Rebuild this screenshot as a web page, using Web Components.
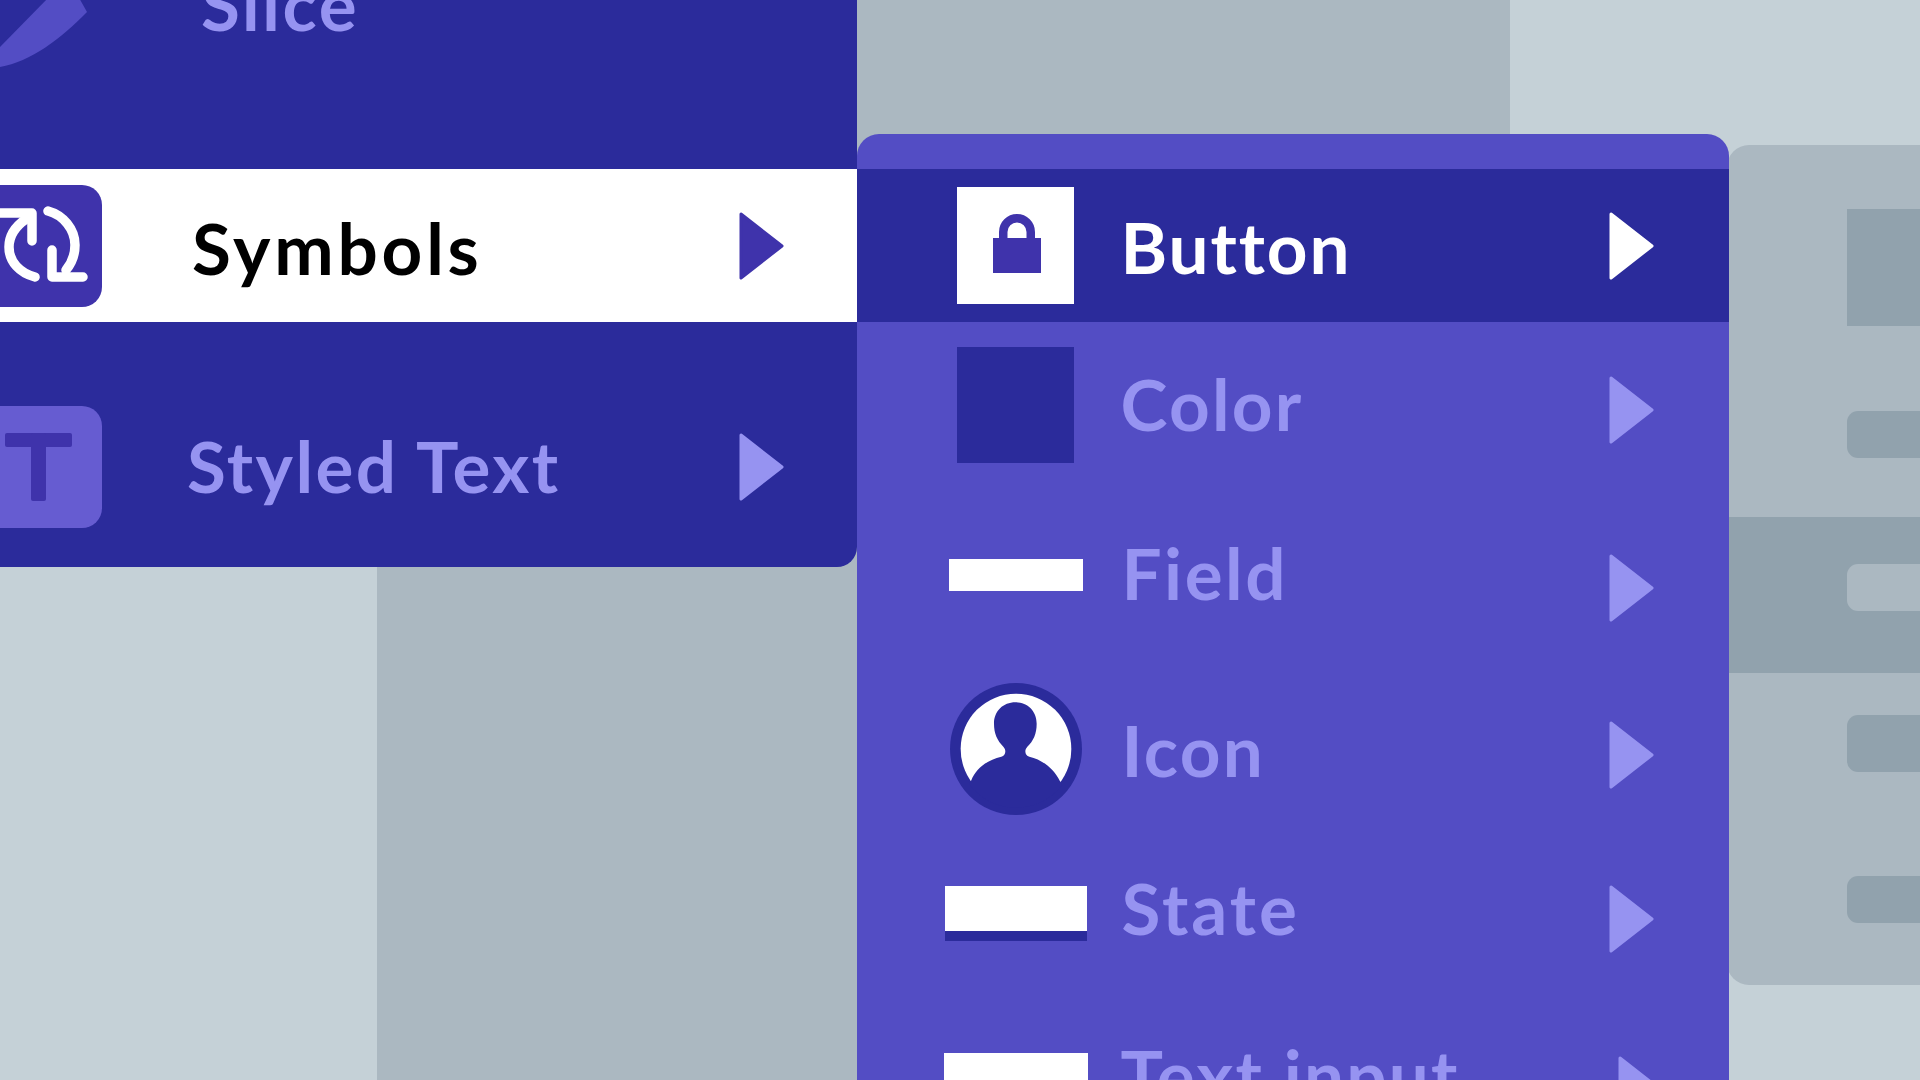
<!DOCTYPE html>
<html>
<head>
<meta charset="utf-8">
<title>Symbols menu</title>
<style>
  html, body { margin: 0; padding: 0; background: #c5d1d7; }
</style>
</head>
<body>
<app-stage>
  <back-panel></back-panel>

  <menu-panel side="left">
    <menu-row height="249" up="44.5" label="Slice" label-up="41" label-x="99" label-space="2.5" no-arrow muted>
      <svg slot="icon" width="102" height="134" viewBox="0 -67 102 134"><path d="M50 -4 H78 L87 12 C62 38 30 62 0 67 V47 Z" fill="#534dc4"/></svg>
    </menu-row>
    <menu-row height="153" label="Symbols" label-up="-2" label-x="90" label-space="3.8" selected>
      <icon-tile slot="icon" color="#3f33ab">
        <svg width="102" height="122" viewBox="0 0 102 122" fill="none" stroke="#fff" stroke-width="9.5" stroke-linecap="round" stroke-linejoin="round">
          <path d="M-6 28 H32 V56"/>
          <path d="M26 34 C13 43 9 53 9 62 C9 77 20 88 35 92"/>
          <path d="M48 26 C63 30 75 44 75 60 C75 71 71 79 66 85"/>
          <path d="M52 65 V92 H83"/>
        </svg>
      </icon-tile>
    </menu-row>
    <menu-row height="154" gap-top="68" label="Styled Text" label-up="1.5" label-x="85" label-space="2.4" muted>
      <icon-tile slot="icon" color="#665cd1">
        <svg width="102" height="122" viewBox="0 0 102 122" fill="#3f33ab">
          <rect x="5" y="27" width="67" height="14" rx="2"/>
          <rect x="31" y="27" width="15" height="68" rx="2"/>
        </svg>
      </icon-tile>
    </menu-row>
  </menu-panel>

  <menu-panel side="right">
    <menu-row height="153" label="Button" label-up="-1" label-x="25" label-space="1.9" arrow-right="74" active indent>
      <svg slot="icon" width="117" height="117" viewBox="0 0 117 117">
        <rect width="117" height="117" fill="#fff"/>
        <path d="M46.250 51 V45 A13.750 13.750 0 0 1 73.750 45 V51" fill="none" stroke="#3f33ab" stroke-width="8.500"/>
        <rect x="36" y="51" width="48" height="35" fill="#3f33ab"/>
      </svg>
    </menu-row>
    <menu-row height="176" up="5" label="Color" label-up="6.5" label-x="25" label-space="2.2" arrow-right="74" muted indent>
      <svg slot="icon" width="117" height="116" viewBox="0 0 117 116"><rect width="117" height="116" fill="#2b2b9b"/></svg>
    </menu-row>
    <menu-row height="180" up="13.5" label="Field" label-up="15.5" label-x="26" label-space="2.5" arrow-right="74" muted indent>
      <svg slot="icon" width="134" height="32" viewBox="0 0 134 32"><rect width="134" height="32" fill="#fff"/></svg>
    </menu-row>
    <menu-row height="154" up="6.5" label="Icon" label-up="5.5" label-x="26" label-space="2.3" arrow-right="74" muted indent>
      <svg slot="icon" width="160" height="160" viewBox="16 -4 480 480">
        <circle cx="256" cy="236" r="198" fill="#2b2b9b"/>
        <circle cx="256" cy="236" r="166" fill="#fff"/>
        <path d="M122 330 C135 295 170 268 212 259 C225 255 228 240 218 229 C200 210 190 190 190 160 C190 122 218 96 254 96 C290 96 318 122 318 160 C318 190 308 212 290 229 C280 240 283 255 296 259 C335 268 370 295 388 333 L395 345 A177 177 0 0 1 115 342 Z" fill="#2b2b9b"/>
      </svg>
    </menu-row>
    <menu-row height="174" up="5.5" label="State" label-up="11.5" label-x="26" label-space="3" arrow-right="74" muted indent>
      <svg slot="icon" width="142" height="55" viewBox="0 0 142 55"><rect width="142" height="45" fill="#fff"/><rect y="45" width="142" height="10" fill="#2b2b9b"/></svg>
    </menu-row>
    <menu-row height="168" up="15" label="Text input" label-up="15.5" label-x="25" label-space="2.2" arrow-right="65" muted indent>
      <svg slot="icon" width="144" height="44" viewBox="0 0 144 44"><rect width="144" height="44" fill="#fff"/></svg>
    </menu-row>
  </menu-panel>
</app-stage>

<script>
// components

class AppStage extends HTMLElement {
  constructor() {
    super();
    this.attachShadow({ mode: 'open' });
    this.shadowRoot.innerHTML = `
      <style>
        :host {
          display: block;
          position: relative;
          width: 1920px;
          height: 1080px;
          overflow: hidden;
          background: #c5d1d7;
          font-family: Lato, "Noto Sans", sans-serif;
        }
        .bands {
          display: grid;
          grid-template-columns: 377px 1133px 1fr;
          height: 100%;
        }
        .mid { background: #abb8c1; }
      </style>
      <div class="bands"><div></div><div class="mid"></div><div></div></div>
      <slot></slot>
    `;
  }
}

class BackPanel extends HTMLElement {
  constructor() {
    super();
    this.attachShadow({ mode: 'open' });
    this.shadowRoot.innerHTML = `
      <style>
        :host {
          display: flex;
          flex-direction: column;
          position: absolute;
          left: 1727px;
          top: 145px;
          width: 260px;
          height: 840px;
          box-sizing: border-box;
          padding-top: 64px;
          background: #abb8c1;
          border-radius: 22px;
        }
        .bar { margin-left: 120px; height: 47px; background: #91a2ad; border-radius: 11px; flex: none; }
        .square { margin-left: 120px; height: 117px; background: #91a2ad; flex: none; }
        .band { margin-top: 59px; height: 156px; background: #91a2ad; display: flex; flex-direction: column; flex: none; padding-top: 47px; box-sizing: border-box; }
        .band .bar { background: #abb8c1; }
      </style>
      <div class="square"></div>
      <div class="bar" style="margin-top:85px"></div>
      <div class="band"><div class="bar"></div></div>
      <div class="bar" style="margin-top:42px;height:57px"></div>
      <div class="bar" style="margin-top:104px"></div>
    `;
  }
}

class MenuPanel extends HTMLElement {
  constructor() {
    super();
    this.attachShadow({ mode: 'open' });
    this.shadowRoot.innerHTML = `
      <style>
        :host {
          display: flex;
          flex-direction: column;
          position: absolute;
          overflow: hidden;
          box-sizing: border-box;
        }
        :host([side="left"]) {
          left: 0;
          top: -80px;
          width: 857px;
          height: 647px;
          background: #2b2b9b;
          border-radius: 0 0 20px 0;
        }
        :host([side="right"]) {
          left: 857px;
          top: 134px;
          width: 872px;
          padding-top: 35px;
          background: #534dc4;
          border-radius: 22px 22px 0 0;
        }
      </style>
      <slot></slot>
    `;
  }
}

class IconTile extends HTMLElement {
  constructor() {
    super();
    this.attachShadow({ mode: 'open' });
    this.shadowRoot.innerHTML = `
      <style>
        :host {
          display: block;
          width: 102px;
          height: 122px;
          border-radius: 0 20px 20px 0;
          background: var(--tile);
          overflow: hidden;
        }
        ::slotted(svg) { display: block; }
      </style>
      <slot></slot>
    `;
    this.style.setProperty('--tile', this.getAttribute('color'));
  }
}

class MenuRow extends HTMLElement {
  constructor() {
    super();
    this.attachShadow({ mode: 'open' });
    const label = this.getAttribute('label');
    const arrow = this.hasAttribute('no-arrow') ? '' : `
      <svg class="arrow" width="46" height="68" viewBox="0 0 46 68">
        <path d="M2 2 L43 34 L2 66 Z" stroke-width="3" stroke-linejoin="round"/>
      </svg>`;
    this.shadowRoot.innerHTML = `
      <style>
        :host {
          display: flex;
          align-items: center;
          flex: none;
          box-sizing: border-box;
          color: #9693f1;
          --arrow: #9693f1;
        }
        :host([selected]) { background: #fff; color: #000; --arrow: #3f33ab; }
        :host([active]) { background: #2b2b9b; color: #fff; --arrow: #fff; }
        :host([indent]) .icon { width: 160px; margin-left: 78.5px; }
        .icon { display: flex; justify-content: center; flex: none; margin-bottom: calc(var(--up, 0px) * 2); }
        ::slotted(svg) { display: block; }
        .label {
          font-size: 71px;
          font-weight: 700;
          line-height: 80px;
          letter-spacing: var(--label-space, 2px);
          white-space: nowrap;
          margin-left: var(--label-x, 0);
          margin-bottom: calc(var(--label-up, 0px) * 2);
        }
        .arrow { margin-left: auto; margin-right: var(--arrow-right, 72px); fill: var(--arrow); stroke: var(--arrow); flex: none; }
      </style>
      <div class="icon"><slot name="icon"></slot></div>
      <div class="label">${label}</div>
      ${arrow}
    `;
    // layout numbers come in as attributes
    this.style.height = this.getAttribute('height') + 'px';
    if (this.hasAttribute('gap-top')) this.style.marginTop = this.getAttribute('gap-top') + 'px';
    if (this.hasAttribute('up')) this.style.setProperty('--up', this.getAttribute('up') + 'px');
    if (this.hasAttribute('label-up')) this.style.setProperty('--label-up', this.getAttribute('label-up') + 'px');
    if (this.hasAttribute('label-x')) this.style.setProperty('--label-x', this.getAttribute('label-x') + 'px');
    if (this.hasAttribute('label-space')) this.style.setProperty('--label-space', this.getAttribute('label-space') + 'px');
    if (this.hasAttribute('arrow-right')) this.style.setProperty('--arrow-right', this.getAttribute('arrow-right') + 'px');
  }
}

customElements.define('app-stage', AppStage);
customElements.define('back-panel', BackPanel);
customElements.define('menu-panel', MenuPanel);
customElements.define('icon-tile', IconTile);
customElements.define('menu-row', MenuRow);
</script>
</body>
</html>
